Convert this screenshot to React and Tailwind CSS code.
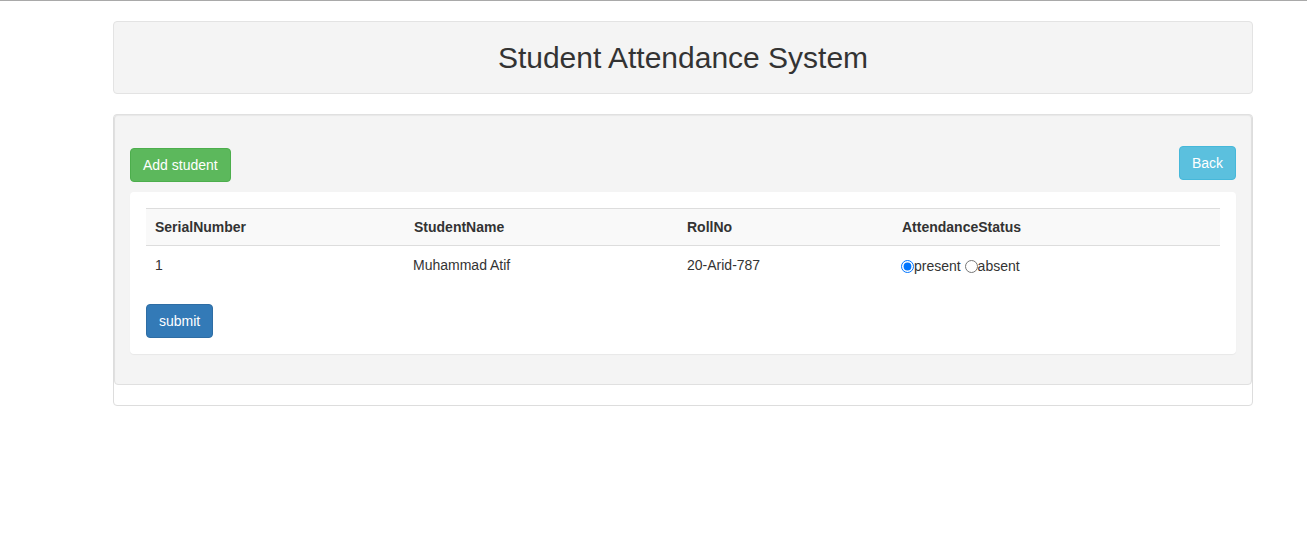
import { useState } from 'react';

const STUDENTS = [
  { serial: 1, name: 'Muhammad Atif', roll: '20-Arid-787' },
];

export default function App() {
  const [status, setStatus] = useState({ 1: 'present' });

  return (
    <div
      className="min-h-[553px] bg-white border-t border-[#a9a9a9] text-[14px] text-[#333]"
      style={{ fontFamily: '"Liberation Sans", Arial, Helvetica, sans-serif' }}
    >
      <div className="w-[1140px] ml-[113px] pt-[20px]">
        {/* Header */}
        <div className="h-[73px] bg-[#f4f4f4] border border-[#e3e3e3] rounded-[4px] flex items-center justify-center">
          <h1 className="text-[30px] leading-none text-[#333] mt-[1px]">Student Attendance System</h1>
        </div>

        {/* Panel */}
        <div className="mt-[20px] bg-white border border-[#dddddd] rounded-[4px] h-[292px]">
          <div className="h-[271px] -mt-px bg-[#f4f4f4] border border-[#e0e0e0] rounded-[4px] shadow-[inset_0_1px_1px_rgba(0,0,0,0.05)] px-[15px] pt-[31px]">
            <div className="flex justify-between items-start">
              <button className="mt-[2px] h-[34px] px-[12px] bg-[#5cb85c] border border-[#4cae4c] rounded-[4px] text-white text-[14px]">
                Add student
              </button>
              <button className="h-[34px] px-[12px] bg-[#5bc0de] border border-[#46b8da] rounded-[4px] text-white text-[14px]">
                Back
              </button>
            </div>

            <div className="mt-[10px] bg-white rounded-[4px] shadow-[0_1px_1px_rgba(0,0,0,0.05)] px-[16px] pt-[16px] pb-[16px]">
              <table className="w-full border-collapse">
                <thead>
                  <tr className="bg-[#f9f9f9] border-t border-b border-[#dddddd]">
                    <th className="w-[259px] h-[37px] text-left pl-[9px] font-bold">SerialNumber</th>
                    <th className="w-[273px] text-left pl-[9px] font-bold">StudentName</th>
                    <th className="w-[215px] text-left pl-[9px] font-bold">RollNo</th>
                    <th className="text-left pl-[9px] font-bold">AttendanceStatus</th>
                  </tr>
                </thead>
                <tbody>
                  {STUDENTS.map((s) => (
                    <tr key={s.serial}>
                      <td className="h-[39px] pl-[9px] align-middle">{s.serial}</td>
                      <td className="pl-[8px]">{s.name}</td>
                      <td className="pl-[9px]">{s.roll}</td>
                      <td className="pl-[8px] pt-[4px]">
                        <label className="inline-flex items-center">
                          <input
                            type="radio"
                            name={`att-${s.serial}`}
                            checked={status[s.serial] === 'present'}
                            onChange={() => setStatus({ ...status, [s.serial]: 'present' })}
                            className="m-0 w-[13px] h-[13px]"
                          />
                          present
                        </label>{' '}
                        <label className="inline-flex items-center">
                          <input
                            type="radio"
                            name={`att-${s.serial}`}
                            checked={status[s.serial] === 'absent'}
                            onChange={() => setStatus({ ...status, [s.serial]: 'absent' })}
                            className="m-0 w-[13px] h-[13px]"
                          />
                          absent
                        </label>
                      </td>
                    </tr>
                  ))}
                </tbody>
              </table>

              <button className="mt-[19px] h-[34px] px-[12px] pt-[1px] bg-[#337ab7] border border-[#2e6da4] rounded-[4px] text-white text-[14px]">
                submit
              </button>
            </div>
          </div>
        </div>
      </div>
    </div>
  );
}
